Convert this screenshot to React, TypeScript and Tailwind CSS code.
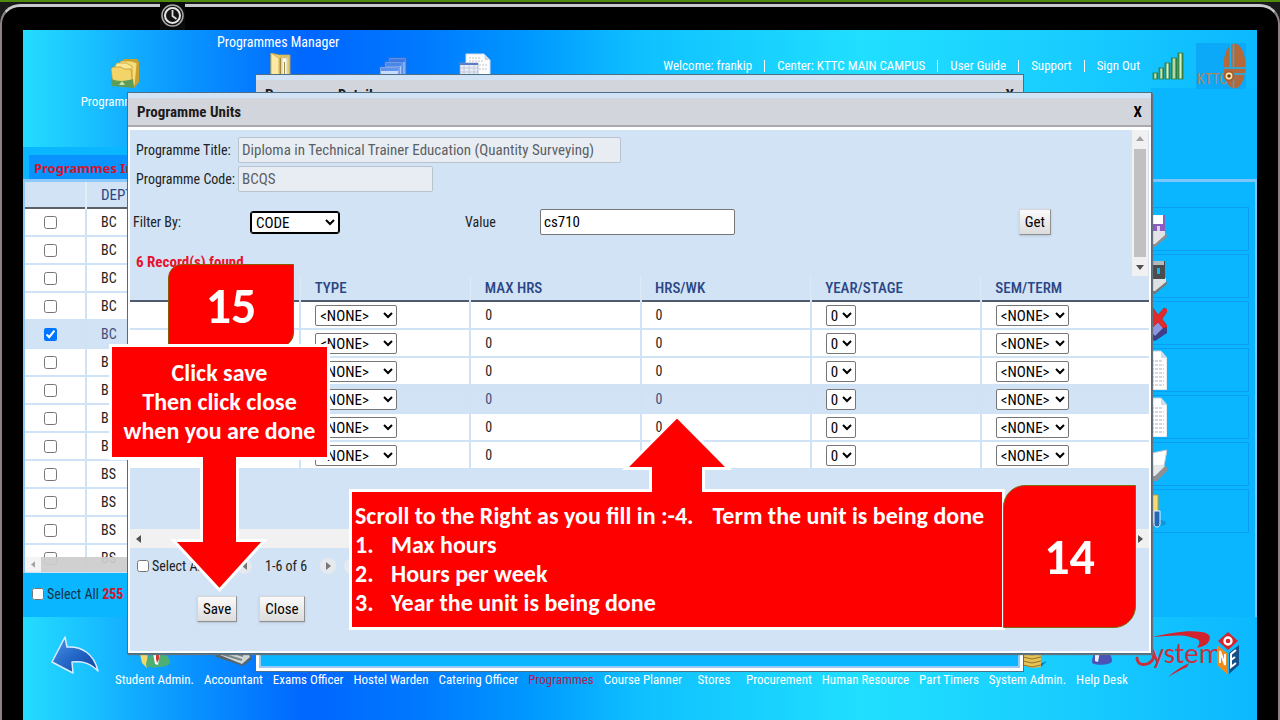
import type { ReactNode } from "react";

const departments = ["BC", "BC", "BC", "BC", "BC", "BC", "BC", "BC", "BC", "BS", "BS", "BS", "BS"];
const unitRows = [0, 1, 2, 3, 4, 5];
const unitHeads = ["", "TYPE", "MAX HRS", "HRS/WK", "YEAR/STAGE", "SEM/TERM"];

const headerFill =
  "[background:linear-gradient(#0ab6ff,#0ab6ff)_right_bottom/106px_59px_no-repeat,linear-gradient(90deg,#24dcff_0%,#1cc8ff_4%,#0a96ff_13%,#0066ff_23%,#0078ff_32%,#0098ff_41%,#0fc0ff_50%,#20dfff_68%,#18ccff_85%,#0cb8ff_100%)]";
const footerFill =
  "bg-[linear-gradient(90deg,#24dcff_0%,#1cc8ff_4%,#0a96ff_13%,#0066ff_23%,#0078ff_32%,#0098ff_41%,#0fc0ff_50%,#20dfff_68%,#18ccff_85%,#0cb8ff_100%)]";

function Folders({ h }: { h: number }) {
  return (
    <svg width="34" height={h} viewBox="0 0 34 32" preserveAspectRatio="xMidYMin slice" aria-hidden="true">
      <path d="M14 5l2-3h13l2 3v20l-5 6-12-4z" fill="#c9a12c" />
      <path d="M11 7l2-3h10l6 2-2 22-14 2z" fill="#f6dd7a" stroke="#c59a28" strokeWidth=".7" />
      <path d="M7 9l2-3h9l6 3v19H7z" fill="#fbe896" stroke="#c59a28" strokeWidth=".7" />
      <path d="M3 12l2-2h8l3 2h7l2 18-20-2z" fill="#f3d468" stroke="#b98f25" strokeWidth=".7" />
      <path d="M3 22c8 3 15 2 22 0l1 9c-7-1-15-1-22-2z" fill="#5f9c57" />
      <path d="M14 24l3 4h-6z" fill="#c7e5b0" />
    </svg>
  );
}

function OpenFolder() {
  return (
    <svg width="24" height="24" viewBox="0 0 24 24" aria-hidden="true">
      <path d="M3 0l8 2h11v22H3z" fill="#ecd077" stroke="#c9a440" strokeWidth=".8" />
      <path d="M12 4h9v20h-9z" fill="#f4e29c" stroke="#c9a440" strokeWidth=".8" />
      <path d="M14 5h5v19h-5z" fill="#fdfbe8" stroke="#b6b08d" strokeWidth=".6" />
      <path d="M3 0l8 5v19H3z" fill="#fbe9a4" stroke="#c9a440" strokeWidth=".8" />
      <path d="M12.500 5v19M16.500 9v15" stroke="#a58a3c" strokeWidth="1" />
    </svg>
  );
}

function Windows() {
  return (
    <svg width="28" height="20" viewBox="0 0 28 20" aria-hidden="true">
      <rect x="10" y="1" width="17" height="19" fill="#7fb0f2" stroke="#3b70d8" />
      <rect x="11" y="2" width="15" height="3" fill="#3f7be6" />
      <rect x="6" y="5" width="17" height="15" fill="#a6caf8" stroke="#3b70d8" />
      <rect x="7" y="6" width="15" height="3" fill="#4b86ea" />
      <rect x="1" y="10" width="19" height="12" fill="#c6dcfa" stroke="#3b70d8" />
      <rect x="2" y="11" width="17" height="3" fill="#5d93ee" />
    </svg>
  );
}

function Sheets() {
  return (
    <svg width="32" height="22" viewBox="0 0 32 22" aria-hidden="true">
      <path d="M7 1h18l6 6v16H7z" fill="#fdfdfd" stroke="#d5dbe4" />
      <path d="M25 1l1 6h5z" fill="#c9d4e4" />
      <path d="M10 5h12M10 8h14M20 12h9M20 16h9" stroke="#c4c6ce" strokeDasharray="2 1" />
      <rect x="1" y="10" width="18" height="13" fill="#e8ecf4" stroke="#8fa0bc" strokeWidth=".7" />
      <path d="M1 11h18" stroke="#5b7ec6" strokeWidth="2" />
      <path d="M1 15h18M1 19h18M5 12v10M10 12v10M15 12v10" stroke="#b6c0d2" strokeWidth=".7" />
    </svg>
  );
}

function Signal() {
  return (
    <svg width="32" height="28" viewBox="0 0 32 28" aria-hidden="true">
      <defs>
        <linearGradient id="bar" x1="0" x2="1">
          <stop offset="0" stopColor="#1f7a31" />
          <stop offset=".5" stopColor="#d6f2c8" />
          <stop offset="1" stopColor="#1a6b2a" />
        </linearGradient>
      </defs>
      <g fill="url(#bar)" stroke="#2b7a3a" strokeWidth=".8">
        <rect x="1" y="21" width="4.500" height="6" />
        <rect x="7" y="16" width="4.500" height="11" />
        <rect x="13" y="11" width="5" height="16" />
        <rect x="19.500" y="6" width="5" height="21" />
        <rect x="26" y="1" width="5" height="26" />
      </g>
    </svg>
  );
}

function CollegeLogo() {
  return (
    <svg width="50" height="46" viewBox="0 0 50 46" role="img" aria-label="College logo">
      <rect width="50" height="46" fill="#0ba9f7" />
      <ellipse cx="38.500" cy="23" rx="11" ry="22.500" fill="#b5683a" />
      <path d="M28 25h22M28 31h22" stroke="#12b6fb" strokeWidth="1.600" />
      <path d="M34.500 0v24M37.500 0v24M37.500 32v14" stroke="#12b6fb" strokeWidth="1.400" />
      <text x="1" y="41" fontSize="14" fill="#b58463" fontFamily="Roboto Condensed, sans-serif">
        KTTC
      </text>
      <circle cx="33" cy="33" r="5.500" fill="#a95f33" />
      <circle cx="33" cy="33" r="2.600" fill="#6b3a1c" stroke="#ffe9a8" strokeWidth="1.600" />
    </svg>
  );
}

function SystemLogo() {
  return (
    <svg width="108" height="48" viewBox="0 0 108 48" role="img" aria-label="System logo">
      <path d="M17 6C36 2 52 -1 66 1c9 1 10 5 8 9-2 4-5 5-12 7 4-6 3-9-4-10C48 3 36 5 17 6z" fill="#d2222e" />
      <path d="M33 46C40 40 46 36 54 32l-2 4c-7 3-12 6-19 10z" fill="#d2222e" />
      <path d="M2 27c0 9 12 8 16 1 2-4-1-7-5-9" fill="none" stroke="#c8303c" strokeWidth="3" strokeLinecap="round" />
      <text x="16" y="32" fontSize="29" fill="#c8303c" fontFamily="Carlito, sans-serif">
        ystem
      </text>
      <path d="M93 1l10 9-10 9-10-9z" fill="#d5242c" />
      <circle cx="93" cy="10" r="3.500" fill="none" stroke="#fff" strokeWidth="2.400" />
      <path d="M82 14l10 8v21l-10-9z" fill="#f08a1d" />
      <path d="M94 22l10-8v20l-10 9z" fill="#164f86" />
      <path d="M85 32V20l5 14V23M101 19l-5 4v13l5-4M96 29l4-3" fill="none" stroke="#fff" strokeWidth="2" />
    </svg>
  );
}

function BackArrow() {
  return (
    <svg width="50" height="40" viewBox="0 0 50 40" aria-hidden="true">
      <defs>
        <linearGradient id="back" x1="0" y1="0" x2="1" y2="1">
          <stop offset="0" stopColor="#4f96e6" />
          <stop offset=".5" stopColor="#2467c8" />
          <stop offset="1" stopColor="#0d3f9a" />
        </linearGradient>
      </defs>
      <path
        d="M14 1l2 10c15-1 27 7 31 24-8-8-15-10-26-9l1 11L1 26z"
        fill="url(#back)"
        stroke="#d9ecff"
        strokeWidth="1.500"
        strokeLinejoin="round"
      />
    </svg>
  );
}

function ToolIcon({ kind }: { kind: string }) {
  return (
    <svg className="-ml-[5px]" width="44" height="40" viewBox="0 0 44 40" aria-hidden="true">
      {kind === "save" && (
        <>
          <path d="M4 24h39l1 4-12 10H4z" fill="#8d8f94" />
          <path d="M4 22h38v4L32 35H4z" fill="#e3e4e8" />
          <rect x="10" y="6" width="32" height="16" fill="#8a5fc0" />
          <rect x="14" y="6" width="26" height="9" fill="#fff" />
          <rect x="34" y="17" width="3" height="5" fill="#d9d4ea" />
        </>
      )}
      {kind === "disk" && (
        <>
          <path d="M4 24h39l1 4-12 10H4z" fill="#77797c" />
          <path d="M4 22h39v4L32 35H4z" fill="#dfe1e2" />
          <path d="M10 5h32v18H10z" fill="#4a4c50" />
          <rect x="12" y="5" width="29" height="4" fill="#b5b9bc" />
          <rect x="34" y="12" width="3" height="6" fill="#10b6ef" />
        </>
      )}
      {kind === "delete" && (
        <>
          <path d="M20 24l16-6 8 6v6L32 38 20 34z" fill="#3f3f88" />
          <path d="M24 24l12-5 6 4-10 10z" fill="#8d96e0" />
          <path d="M25 8l5-3 5 7 6-7 4 2-6 9 6 8-5 1-5-6-6 6-4-3 6-7z" fill="#e32b2b" stroke="#c1181c" strokeWidth=".6" />
        </>
      )}
      {kind === "page" && (
        <>
          <path d="M14 1h24l6 7v32H14z" fill="#fff" stroke="#c5d1dc" />
          <path d="M38 1v7h6z" fill="#cfdde8" />
          <path d="M20 11h20M20 15h21M20 19h21M20 23h21M20 27h21M20 31h21M20 35h21" stroke="#b5b5ba" strokeDasharray="3 1" />
        </>
      )}
      {kind === "print" && (
        <>
          <path d="M24 10l20-4-3 16H22z" fill="#fff" stroke="#c2c8cc" />
          <path d="M10 22h30l4 1v4L34 37H10z" fill="#8d9093" />
          <path d="M10 20l32 2-10 10H10z" fill="#e5e7e8" />
        </>
      )}
      {kind === "help" && (
        <>
          <ellipse cx="37" cy="32" rx="6" ry="3" fill="#1173b6" opacity=".5" />
          <path d="M26 4h9v28h-9z" fill="#f6dc75" stroke="#c59d31" />
          <path d="M31 20h6v13c0 4-6 4-6 0z" fill="#2468b4" stroke="#e7f2ff" />
        </>
      )}
    </svg>
  );
}

const tools = ["save", "disk", "delete", "page", "page", "print", "help"];

const footLinks: { label: string; icon?: ReactNode; active?: boolean }[] = [
  {
    label: "Student Admin.",
    icon: (
      <svg width="36" height="32" viewBox="0 0 36 32" aria-hidden="true">
        <path d="M2 8l10 2-1 21-5-5z" fill="#f4d768" />
        <circle cx="22" cy="9" r="6" fill="#e9bd92" />
        <path d="M10 29c0-9 5-13 12-13s12 4 12 10c0 4-20 6-24 3z" fill="#4fae73" />
        <path d="M17 16h7l-2 12-3-1z" fill="#fff" />
        <path d="M20 15h3v7l-2 4-1-4z" fill="#cf3a35" />
      </svg>
    ),
  },
  {
    label: "Accountant",
    icon: (
      <svg width="40" height="30" viewBox="0 0 40 30" aria-hidden="true">
        <path d="M2 15l32-4 5 11-9 7L3 20z" fill="#56646c" />
        <path d="M3 10l28-3 6 13-8 7L2 16z" fill="#cfd6d6" />
        <path d="M9 17l20 6M16 14l14 5" stroke="#7a8688" strokeWidth="2" />
      </svg>
    ),
  },
  { label: "Exams Officer" },
  { label: "Hostel Warden" },
  { label: "Catering Officer" },
  { label: "Programmes", active: true },
  { label: "Course Planner" },
  { label: "Stores" },
  { label: "Procurement" },
  { label: "Human Resource" },
  { label: "Part Timers" },
  {
    label: "System Admin.",
    icon: (
      <svg className="ml-3" width="28" height="32" viewBox="0 0 28 32" aria-hidden="true">
        <path d="M18 28l10-4-6 6z" fill="#0a78c8" />
        <path d="M4 6h18v24l-9 1-9-3z" fill="#e6c257" />
        <path d="M4 12l9 2 9-2M4 16l9 2 9-2M4 20l9 2 9-2M4 24l9 2 9-2M4 28l9 2 9-2" fill="none" stroke="#96722a" />
      </svg>
    ),
  },
  {
    label: "Help Desk",
    icon: (
      <svg width="22" height="30" viewBox="0 0 22 30" aria-hidden="true">
        <circle cx="11" cy="7" r="6" fill="#e8be96" />
        <path d="M1 26c0-9 4-12 10-12s10 4 10 10c0 4-16 5-20 2z" fill="#4a53b8" />
        <path d="M4 14h5l-2 11-3-1z" fill="#eef2ff" />
      </svg>
    ),
  },
];

function Options({ label, value, size }: { label: string; value: string; size: string }) {
  return (
    <select
      aria-label={label}
      defaultValue={value}
      className={`block h-[21px] rounded-xs border border-[#767676] bg-white text-[15px] text-black ${size}`}
    >
      <option>{value}</option>
    </select>
  );
}

const button =
  "h-[26px] border border-t-[#d6d6d6] border-r-[#8f8f8f] border-b-[#8f8f8f] border-l-[#d6d6d6] bg-linear-to-b from-[#fafafa] to-[#dcdcdc] px-[5px] text-[15px] text-black shadow-sm";

function Separator() {
  return <span className="h-3 w-px bg-white" />;
}

function UnitsWindow() {
  return (
    <section
      aria-label="Programme Units"
      className="absolute top-[90px] right-[128px] left-[127px] z-20 border border-[#4c6f86] bg-white shadow-[1px_1px_1px_#66737c]"
    >
      <div className="flex h-[34px] items-center justify-between border-t-[5px] border-b-2 border-t-[#d1e3f5] border-b-[#a9a9ab] bg-[#d3d5dc] px-[9px] text-[15px]">
        <h2 className="font-bold text-[#1c1c1c]">Programme Units</h2>
        <button className="font-bold text-black" aria-label="Close window">
          X
        </button>
      </div>
      <div className="m-[2px] mt-[3px] bg-[#d1e3f5]">
        <div className="flex h-[146px]">
          <form className="min-w-0 flex-1 pt-[5px] pl-[6px] text-[#222]">
            <div className="flex h-[29px] items-center">
              <label htmlFor="title" className="w-[102px] shrink-0">
                Programme Title:
              </label>
              <input
                id="title"
                disabled
                className="h-[26px] w-[383px] rounded-xs border border-[#b9c3cd] bg-[#e8edf3] px-[3px] text-[15px] text-[#5c5f63]"
                defaultValue="Diploma in Technical Trainer Education (Quantity Surveying)"
              />
            </div>
            <div className="flex h-[29px] items-center">
              <label htmlFor="code" className="w-[102px] shrink-0">
                Programme Code:
              </label>
              <input
                id="code"
                disabled
                className="h-[26px] w-[195px] rounded-xs border border-[#b9c3cd] bg-[#e8edf3] px-[3px] text-[15px] text-[#5c5f63]"
                defaultValue="BCQS"
              />
            </div>
            <div className="mt-4 -ml-[3px] flex h-[26px] items-center">
              <label htmlFor="filter" className="w-[118px]">
                Filter By:
              </label>
              <select
                id="filter"
                className="h-[21px] w-[88px] rounded-xs border border-black bg-white text-[15px] text-black outline outline-black"
                defaultValue="CODE"
              >
                <option>CODE</option>
              </select>
              <label htmlFor="value" className="ml-[126px] w-[75px]">
                Value
              </label>
              <input
                id="value"
                className="h-[26px] w-[195px] rounded-xs border border-[#767676] bg-white px-[3px] text-[15px] text-black"
                defaultValue="cs710"
              />
              <button type="button" className={`mr-[81px] ml-auto ${button}`}>
                Get
              </button>
            </div>
            <p className="mt-[19px] text-[15px] font-bold text-[#e8112d]">6 Record(s) found</p>
          </form>
          <div className="mr-[1px] flex w-4 flex-col items-center bg-[#f1f1f1] py-[6px]">
            <svg width="8" height="5" viewBox="0 0 8 5" aria-hidden="true">
              <path d="M4 0l4 5H0z" fill="#a3a3a3" />
            </svg>
            <div className="my-2 w-3 flex-1 bg-[#c1c1c1]" />
            <svg width="8" height="5" viewBox="0 0 8 5" aria-hidden="true">
              <path d="M0 0h8L4 5z" fill="#505050" />
            </svg>
          </div>
        </div>
        <table className="w-full table-fixed border-collapse text-left">
          <colgroup>
            <col className="w-[16.7%]" />
            <col className="w-[16.7%]" />
            <col className="w-[16.7%]" />
            <col className="w-[16.7%]" />
            <col className="w-[16.7%]" />
            <col />
          </colgroup>
          <thead>
            <tr className="h-[25px] border-b-2 border-[#4f5b6d] text-[15px] text-[#2b4684]">
              {unitHeads.map((h) => (
                <th key={h} className="border-l border-l-[#dfe9f5] px-[14px] py-0 font-medium first:border-l-0">
                  {h}
                </th>
              ))}
            </tr>
          </thead>
          <tbody>
            {unitRows.map((r) => (
              <tr
                key={r}
                className={
                  r === 3
                    ? "h-7 border-b-2 border-[#cfe2f6] bg-[#d1e3f5] text-[#3c4f7c]"
                    : "h-7 border-b-2 border-[#cfe2f6] bg-white text-[#222]"
                }
              >
                <td className="p-0" />
                <td className="border-l-2 border-[#cfe2f6] py-0 pr-0 pl-[14px]">
                  <Options label={`Type, row ${r + 1}`} value="<NONE>" size="w-[82px]" />
                </td>
                <td className="border-l-2 border-[#cfe2f6] py-0 pr-0 pl-[14px]">0</td>
                <td className="border-l-2 border-[#cfe2f6] py-0 pr-0 pl-[14px]">0</td>
                <td className="border-l-2 border-[#cfe2f6] py-0 pr-0 pl-[14px]">
                  <Options label={`Year, row ${r + 1}`} value="0" size="w-[30px]" />
                </td>
                <td className="border-l-2 border-[#cfe2f6] py-0 pr-0 pl-[14px]">
                  <Options label={`Term, row ${r + 1}`} value="<NONE>" size="w-[73px]" />
                </td>
              </tr>
            ))}
          </tbody>
        </table>
        <div className="h-[59px]" />
        <div className="flex h-[19px] items-center justify-between bg-[#f1f1f1] px-[6px]">
          <svg width="5" height="8" viewBox="0 0 5 8" aria-hidden="true">
            <path d="M5 0v8L0 4z" fill="#505050" />
          </svg>
          <svg width="5" height="8" viewBox="0 0 5 8" aria-hidden="true">
            <path d="M0 0v8l5-4z" fill="#505050" />
          </svg>
        </div>
        <div className="flex h-9 items-center pl-[7px] text-[#222]">
          <label className="flex w-[99px] items-center gap-[3px]">
            <input type="checkbox" className="size-3" />
            Select All
          </label>
          <button aria-label="Previous page" className="flex size-4 items-center justify-center rounded-full bg-[#e6e9ee]">
            <svg width="5" height="8" viewBox="0 0 5 8" aria-hidden="true">
              <path d="M5 0v8L0 4z" fill="#777" />
            </svg>
          </button>
          <span className="mx-[13px]">1-6 of 6</span>
          <button aria-label="Next page" className="flex size-4 items-center justify-center rounded-full bg-[#e6e9ee]">
            <svg width="5" height="8" viewBox="0 0 5 8" aria-hidden="true">
              <path d="M0 0v8l5-4z" fill="#777" />
            </svg>
          </button>
          <button aria-label="Last page" className="ml-2 size-4 rounded-full bg-[#e6e9ee]" />
        </div>
        <div className="flex gap-[22px] pt-3 pb-[29px] pl-[67px]">
          <button className={button}>Save</button>
          <button className={button}>Close</button>
        </div>
      </div>
    </section>
  );
}

export default function App() {
  return (
    <div className="relative flex min-h-screen flex-col overflow-hidden border-t-2 border-[#4f8a10] bg-[#1a1a1a] font-['Roboto_Condensed','Roboto',sans-serif] text-[14px] leading-4">
      <div className="mt-[2px] flex flex-1 flex-col rounded-t-[20px] border-x-2 border-t-[3px] border-x-[#8d8282] border-t-[#c9c9cb] bg-black px-[21px] pt-[23px]">
        <header className={`flex h-[117px] justify-between text-[13px] text-white ${headerFill}`}>
          <div>
            <h1 className="pt-[4px] pl-[194px] text-[14px]">Programmes Manager</h1>
            <div className="grid grid-cols-[204px_106px_120px_44px] justify-items-center pt-[3px]">
              <a href="#programmes" className="flex flex-col items-center gap-[5px] pt-1">
                <Folders h={32} />
                Programmes Info
              </a>
              <OpenFolder />
              <div className="pt-1">
                <Windows />
              </div>
              <Sheets />
            </div>
          </div>
          <nav className="flex h-[58px] items-center gap-3 pt-[14px]">
            <span>Welcome: frankip</span>
            <Separator />
            <span>Center: KTTC MAIN CAMPUS</span>
            <Separator />
            <a href="#guide">User Guide</a>
            <Separator />
            <a href="#support">Support</a>
            <Separator />
            <a href="#signout">Sign Out</a>
            <Signal />
            <div className="mr-[11px]">
              <CollegeLogo />
            </div>
          </nav>
        </header>

        <main className="flex h-[470px] bg-[#0ab6ff]">
          <div className="flex min-w-0 flex-1 flex-col">
            <h2 className="mt-2 ml-[6px] h-6 bg-[#0a92ff] pl-[5px] font-['Noto_Sans',sans-serif] text-[13px] leading-[26px] font-bold text-[#d3142c]">
              Programmes Information
            </h2>
            <div className="border-t-[3px] border-l-2 border-[#8fc8fb] bg-[#d1e3f5]">
              <table className="w-full table-fixed border-collapse text-left">
                <colgroup>
                  <col className="w-[61px]" />
                  <col />
                </colgroup>
                <thead>
                  <tr className="h-[26px] border-b-2 border-[#5b5f66] text-[#2b4684]">
                    <th />
                    <th className="border-l-2 border-[#e3edf8] px-[14px] text-[15px] font-normal">DEPT</th>
                  </tr>
                </thead>
                <tbody>
                  {departments.map((d, i) => (
                    <tr
                      key={i}
                      className={
                        i === 4
                          ? "h-7 border-b-2 border-[#cfe2f6] bg-[#d1e3f5] text-[#3c4f7c]"
                          : "h-7 border-b-2 border-[#cfe2f6] bg-white text-[#222]"
                      }
                    >
                      <td className="p-0 pl-[19px]">
                        <input
                          type="checkbox"
                          aria-label={`Select programme ${i + 1}`}
                          defaultChecked={i === 4}
                          className="block size-[13px]"
                        />
                      </td>
                      <td className="border-l-2 border-[#cfe2f6] px-[14px] py-0">{d}</td>
                    </tr>
                  ))}
                </tbody>
              </table>
            </div>
            <div className="relative z-10 -mt-4 ml-[2px] flex h-[15px] items-center bg-[#f1f1f1]/80 pl-[6px]">
              <svg width="4" height="7" viewBox="0 0 5 8" aria-hidden="true">
                <path d="M5 0v8L0 4z" fill="#a3a3a3" />
              </svg>
              <div className="ml-[6px] h-full flex-1 bg-[#c1c1c1]/70" />
            </div>
            <label className="mt-[14px] ml-[9px] flex items-center gap-[3px] text-[#16324a]">
              <input type="checkbox" className="size-3" />
              <span>
                Select All <b className="text-[#d3142c]">255</b>
              </span>
            </label>
          </div>
          <aside className="mt-8 w-[130px] border-t-[3px] border-r-2 border-[#7cc6fb] pt-[25px] pr-[6px]">
            <ul className="flex flex-col gap-[3px]">
              {tools.map((t, i) => (
                <li key={i} className="flex h-11 items-center border border-[#0a9df2]">
                  <ToolIcon kind={t} />
                </li>
              ))}
            </ul>
          </aside>
        </main>

        <footer className={`flex flex-1 items-start text-[13px] text-white ${footerFill}`}>
          <a href="#back" aria-label="Back" className="w-[92px] shrink-0 pt-[19px] pl-7">
            <BackArrow />
          </a>
          <nav className="flex gap-[10px] pt-5">
            {footLinks.map((f) => (
              <a
                key={f.label}
                href="#desk"
                className={`flex min-w-11 flex-col items-center whitespace-nowrap ${f.active ? "text-[#b0205a]" : ""}`}
              >
                <span className="flex h-[35px]">{f.icon}</span>
                {f.label}
              </a>
            ))}
          </nav>
          <div className="mr-[14px] ml-auto pt-[14px]">
            <SystemLogo />
          </div>
        </footer>
      </div>

      <svg className="absolute top-0 left-[160px]" width="25" height="28" viewBox="0 0 25 28" aria-hidden="true">
        <rect width="25" height="28" fill="#0b0b0b" />
        <circle cx="12.500" cy="13.500" r="10.500" fill="#141414" stroke="#a8a8a8" strokeWidth="1.500" />
        <circle cx="12.500" cy="13.500" r="7.500" fill="#111" stroke="#e6e6e6" strokeWidth="2" />
        <path d="M12.500 8v6l4 3" fill="none" stroke="#ddd" strokeWidth="1.800" />
      </svg>

      <section
        aria-label="Programme Details"
        className="absolute top-[72px] right-[256px] left-[255px] z-10 flex h-[598px] flex-col border border-[#4c6f86] bg-white"
      >
        <div className="flex h-[35px] items-center justify-between border-t-[5px] border-[#d1e3f5] bg-[#d3d5dc] px-[9px] text-[15px] font-bold text-[#1c1c1c]">
          <h2>Programme Details</h2>
          <button aria-label="Close details">X</button>
        </div>
        <div className="m-[3px] flex-1 border-2 border-[#9cc8f2] bg-[#0ab6ff]" />
      </section>

      <UnitsWindow />

      <div className="absolute inset-0 z-30 font-['Carlito','Lato',sans-serif] text-[24px] leading-[29px] font-bold text-white">
        <div className="absolute top-[262px] left-[168px] flex h-[83px] w-[126px] items-center justify-center rounded-tl-[14px] rounded-br-[14px] border border-[#8a5a00] bg-[#ff0000] text-[50px]">
          15
        </div>
        <div className="absolute top-[342px] left-[109px] w-[221px]">
          <p className="border-[3px] border-white bg-[#ff0000] pt-[11px] pb-3 text-center">
            Click save
            <br />
            Then click close
            <br />
            when you are done
          </p>
          <svg className="-mt-[3px] ml-[60px]" width="100" height="138" viewBox="0 0 100 138" aria-hidden="true">
            <path
              d="M32.500 0V83.500H4.500L50.500 133 95.500 83.500H68.500V0"
              fill="#ff0000"
              stroke="#fff"
              strokeWidth="3"
            />
          </svg>
        </div>
        <div className="absolute top-[487px] left-[349px] w-[656px] border-[3px] border-white bg-[#ff0000] px-[3px] pt-[9px] pb-[10px]">
          <p className="flex">
            Scroll to the Right as you fill in :-4.<span className="ml-[19px]">Term the unit is being done</span>
          </p>
          <ol className="list-none">
            {["Max hours", "Hours per week", "Year the unit is being done"].map((t, i) => (
              <li key={t} className="flex">
                <span className="w-9">{i + 1}.</span>
                {t}
              </li>
            ))}
          </ol>
        </div>
        <svg className="absolute top-[412px] left-[622px]" width="110" height="78" viewBox="0 0 110 78" aria-hidden="true">
          <path
            d="M28.500 78V54.500H3.500L55 2.500 106.500 54.500H81.500V78"
            fill="#ff0000"
            stroke="#fff"
            strokeWidth="3"
          />
        </svg>
        <div className="absolute top-[483px] left-[1003px] flex h-[143px] w-[133px] items-center justify-center rounded-tl-[22px] rounded-br-[22px] border border-[#7f6a10] bg-[#ff0000] text-[50px]">
          14
        </div>
      </div>
    </div>
  );
}
